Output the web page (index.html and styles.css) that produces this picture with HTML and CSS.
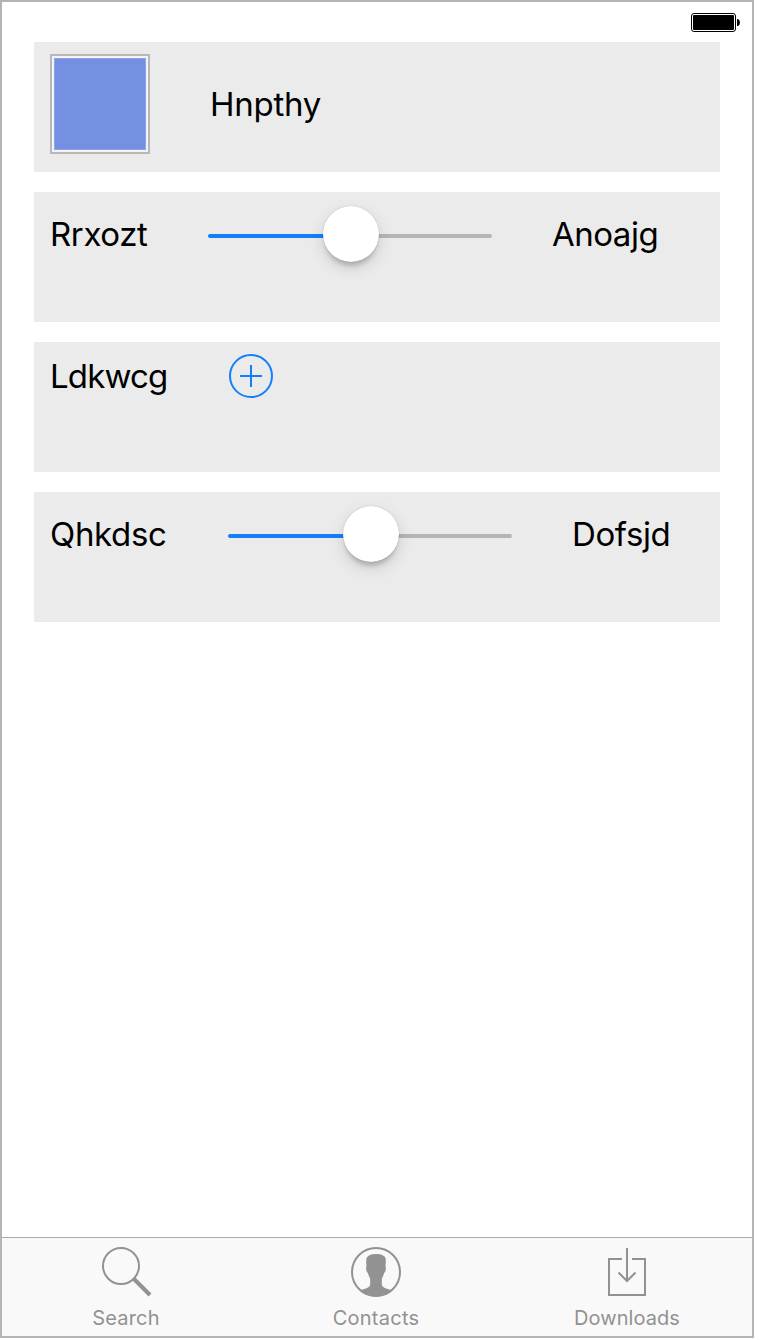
FILE: index.html
```html
<!DOCTYPE html>
<html lang="en">
<head>
<meta charset="utf-8">
<title>Settings</title>
<link rel="stylesheet" href="styles.css">
</head>
<body>
<div class="phone">
  <header class="status">
    <svg width="50" height="20" viewBox="0 0 50 20">
      <rect x="0.5" y="0.5" width="44" height="18" rx="2.5" fill="#fff" stroke="#000"/>
      <rect x="2" y="2" width="41" height="15" rx="1" fill="#000"/>
      <path d="M46 6h1q2 1 2 3.500t-2 3.500h-1z" fill="#000"/>
    </svg>
  </header>
  <main class="rows">
    <section class="row">
      <div class="swatch"><div class="swatch-fill"></div></div>
      <span class="label label-hnpthy">Hnpthy</span>
    </section>
    <section class="row">
      <span class="label label-short label-rrxozt">Rrxozt</span>
      <div class="slider"><div class="track"></div><div class="thumb"></div></div>
      <span class="label label-anoajg">Anoajg</span>
    </section>
    <section class="row">
      <span class="label label-long label-ldkwcg">Ldkwcg</span>
      <svg class="add" width="46" height="44" viewBox="0 0 46 44" fill="none" stroke="#147efb" stroke-width="2">
        <circle cx="23" cy="22" r="21"/>
        <path d="M12 22h22M23 11v22"/>
      </svg>
    </section>
    <section class="row">
      <span class="label label-long label-qhkdsc">Qhkdsc</span>
      <div class="slider"><div class="track"></div><div class="thumb"></div></div>
      <span class="label label-dofsjd">Dofsjd</span>
    </section>
  </main>
  <nav class="tabs">
    <div class="tab">
      <svg width="52" height="52" viewBox="0 0 52 52" fill="none" stroke="#929292">
        <circle cx="21" cy="20" r="18" stroke-width="2"/>
        <path d="M33.500 32.500L50 49" stroke-width="4"/>
      </svg>
      <span class="tab-label tab-label-search">Search</span>
    </div>
    <div class="tab">
      <svg width="52" height="52" viewBox="0 0 52 52">
        <circle cx="26" cy="26" r="24" fill="none" stroke="#929292" stroke-width="2"/>
        <path d="M16.500 12C18 9.500 21 8 26 8s8.500 1.500 9.500 4c.5 3 .3 6 0 9 .8.500.5 3-.5 5-.8.500-1.200 1.500-1.500 3l-1.700 4v6c1 2.500 4 3.500 9.500 5Q35 50.500 26 50.500T10.700 44c5.500-1.500 8.500-2.500 9.500-5v-6l-1.700-4c-.3-1.500-.7-2.500-1.500-3-1-2-1.300-4.500-.5-5-.3-3-.5-6 0-9z" fill="#929292"/>
      </svg>
      <span class="tab-label tab-label-contacts">Contacts</span>
    </div>
    <div class="tab">
      <svg width="52" height="52" viewBox="0 0 52 52" fill="none" stroke="#929292" stroke-width="2">
        <path d="M21 13H8v36h36V13H31M26 2v33M17.500 26.500L26 35l8.500-8.500"/>
      </svg>
      <span class="tab-label tab-label-downloads">Downloads</span>
    </div>
  </nav>
</div>
</body>
</html>
```
FILE: styles.css
```css
* { box-sizing: border-box; }
body { margin: 0; background: #fff; font-family: Inter, "Liberation Sans", sans-serif; }
svg { display: block; flex: none; }
.phone {
  display: flex;
  flex-direction: column;
  width: 754px;
  height: 1338px;
  border: 2px solid #b4b4b4;
}
.status {
  display: flex;
  justify-content: flex-end;
  height: 40px;
  padding: 11px 11px 0 0;
}
.rows {
  display: flex;
  flex: 1;
  flex-direction: column;
  gap: 20px;
  padding: 0 32px;
}
.row {
  display: flex;
  align-items: center;
  align-content: flex-start;
  flex-wrap: wrap;
  column-gap: 60px;
  height: 130px;
  padding: 12px 0 0 16px;
  background: #ebebeb;
}
.label { font-size: 33px; line-height: 40px; white-space: nowrap; color: #000; }
.label-short { width: 98px; }
.label-long { width: 118px; }
.label-hnpthy { letter-spacing: -.25px; }
.label-rrxozt { letter-spacing: -.4px; }
.label-anoajg { letter-spacing: -.5px; }
.label-ldkwcg { letter-spacing: -.85px; }
.label-qhkdsc { letter-spacing: -.35px; }
.label-dofsjd { letter-spacing: -.4px; }
.swatch {
  width: 100px;
  height: 100px;
  padding: 2px;
  border: 2px solid #b8b8b8;
  background: #f2f4f8;
}
.swatch-fill { height: 100%; background: #758fe2; border: 1px solid #8fa4e8; }
.slider {
  display: grid;
  align-items: center;
  width: 284px;
  height: 60px;
}
.track, .thumb { grid-area: 1 / 1; }
.track {
  height: 4px;
  margin-top: 4px;
  border-radius: 2px;
  background: linear-gradient(to right, #147efb 50%, #b5b5b5 50%);
}
.thumb {
  justify-self: center;
  width: 56px;
  height: 56px;
  margin-left: 2px;
  border-radius: 50%;
  background: #fff;
  box-shadow: 0 0 1px rgba(0,0,0,.3), 0 6px 4px -2px rgba(0,0,0,.17), 0 6px 16px rgba(0,0,0,.13);
}
.tabs {
  display: grid;
  grid-template-columns: 248px 252px 250px;
  height: 99px;
  padding-top: 8px;
  border-top: 1px solid #acacac;
  background: #f9f9f9;
}
.tab { display: flex; flex-direction: column; align-items: center; gap: 8px; }
.tab-label { font-size: 20px; line-height: 24px; color: #929292; }
.tab-label-search { letter-spacing: .2px; }
.tab-label-contacts { letter-spacing: .25px; }
.tab-label-downloads { letter-spacing: .05px; }
```
